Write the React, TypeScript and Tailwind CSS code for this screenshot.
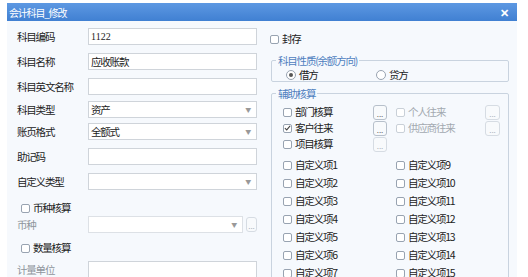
import React from "react";

const font = { fontFamily: '"Noto Sans CJK SC", "Noto Sans", sans-serif' };

function Box({ checked = false, disabled = false }: { checked?: boolean; disabled?: boolean }) {
  return (
    <span
      className={`inline-flex h-[9px] w-[9px] shrink-0 items-center justify-center rounded-[2px] border bg-white ${
        disabled ? "border-[#c9d0d8]" : "border-[#98a3b1]"
      }`}
    >
      {checked && (
        <svg width="8" height="8" viewBox="0 0 8 8">
          <path d="M1 4.2 L3.1 6.2 L7 1.6" fill="none" stroke="#444" strokeWidth="1.2" />
        </svg>
      )}
    </span>
  );
}

function Radio({ on = false }: { on?: boolean }) {
  return (
    <span className="inline-flex h-[10px] w-[10px] shrink-0 items-center justify-center rounded-full border border-[#98a3b1] bg-white">
      {on && <span className="h-[4px] w-[4px] rounded-full bg-[#555]" />}
    </span>
  );
}

function Dots({ disabled = false, w = "w-[14px]" }: { disabled?: boolean; w?: string }) {
  return (
    <span
      className={`flex h-[15px] ${w} items-end justify-center rounded-[3px] border bg-[#f8fafc] pb-[1px] text-[8px] leading-[8px] tracking-[0px] ${
        disabled ? "border-[#d6dce3] text-[#aab2bc]" : "border-[#b7c0cb] text-[#666]"
      }`}
    >
      ...
    </span>
  );
}

function Check({
  label,
  checked = false,
  disabled = false,
}: {
  label: string;
  checked?: boolean;
  disabled?: boolean;
}) {
  return (
    <span className="flex items-center gap-[3px]">
      <Box checked={checked} disabled={disabled} />
      <span className={`whitespace-nowrap ${disabled ? "text-[#a3a9b0]" : "text-[#222]"}`}>{label}</span>
    </span>
  );
}

function Row({
  label,
  mt,
  muted = false,
  children,
}: {
  label: string;
  mt: string;
  muted?: boolean;
  children: React.ReactNode;
}) {
  return (
    <div className={`flex h-[17px] items-center ${mt}`}>
      <span className={`w-[71px] whitespace-nowrap ${muted ? "text-[#8e959c]" : "text-[#222]"}`}>{label}</span>
      {children}
    </div>
  );
}

function Input({ value = "", serif = false }: { value?: string; serif?: boolean }) {
  return (
    <div
      className="flex h-[17px] w-[169px] items-center border border-[#cfd4da] bg-white pl-[2px] text-[#222]"
      style={serif ? { fontFamily: '"Liberation Serif", serif', fontSize: "10px", letterSpacing: 0 } : undefined}
    >
      {value}
    </div>
  );
}

function Select({ value = "", w = "w-[169px]", disabled = false }: { value?: string; w?: string; disabled?: boolean }) {
  return (
    <div
      className={`flex h-[17px] ${w} items-center justify-between border bg-white pl-[2px] pr-[6px] text-[#222] ${
        disabled ? "border-[#dde1e6]" : "border-[#cfd4da]"
      }`}
    >
      <span>{value}</span>
      <span className="text-[6px] text-[#999]">▼</span>
    </div>
  );
}

const pairs: [string, string][] = [
  ["自定义项1", "自定义项9"],
  ["自定义项2", "自定义项10"],
  ["自定义项3", "自定义项11"],
  ["自定义项4", "自定义项12"],
  ["自定义项5", "自定义项13"],
  ["自定义项6", "自定义项14"],
  ["自定义项7", "自定义项15"],
];

export default function App() {
  return (
    <div className="h-[277px] w-[528px] overflow-hidden bg-white text-[10.5px] tracking-[-1.2px]" style={font}>
      <div className="ml-[7px] mt-[3px] w-[510px]">
        {/* title bar */}
        <div className="flex h-[18px] items-center justify-between bg-gradient-to-b from-[#5d98e2] to-[#4080d2] pl-[2px] pr-[9px] text-[10px] text-white">
          <span>会计科目_修改</span>
          <span className="text-[11px] font-bold">✕</span>
        </div>

        {/* body */}
        <div className="flex h-[256px] bg-[#f6f9fd] leading-[14px]">
          {/* left column */}
          <div className="w-[257px] pl-[10px]">
            <Row label="科目编码" mt="mt-[7px]">
              <Input value="1122" serif />
            </Row>
            <Row label="科目名称" mt="mt-[8px]">
              <Input value="应收账款" />
            </Row>
            <Row label="科目英文名称" mt="mt-[8px]">
              <Input />
            </Row>
            <Row label="科目类型" mt="mt-[6px]">
              <Select value="资产" />
            </Row>
            <Row label="账页格式" mt="mt-[5px]">
              <Select value="全额式" />
            </Row>
            <Row label="助记码" mt="mt-[8px]">
              <Input />
            </Row>
            <Row label="自定义类型" mt="mt-[8px]">
              <Select />
            </Row>

            <div className="ml-[4px] mt-[11px] flex h-[14px] items-center">
              <Check label="币种核算" />
            </div>
            <Row label="币种" mt="mt-[1px]" muted>
              <div className="flex w-[169px] items-center justify-between">
                <Select w="w-[155px]" disabled />
                <Dots w="w-[11px]" disabled />
              </div>
            </Row>

            <div className="ml-[4px] mt-[8px] flex h-[14px] items-center">
              <Check label="数量核算" />
            </div>
            <Row label="计量单位" mt="mt-[6px]" muted>
              <Input />
            </Row>
          </div>

          {/* right column */}
          <div className="w-[253px]">
            <div className="ml-[6px] mt-[11px] flex h-[14px] items-center">
              <Check label="封存" />
            </div>

            <fieldset className="ml-[7px] mt-[8px] w-[238px] rounded-[2px] border border-[#c9d3df]">
              <legend className="ml-[4px] px-[2px] leading-[13px] text-[#4f7fbf]">科目性质(余额方向)</legend>
              <div className="flex h-[14px] items-center pl-[14px] pt-[2px]">
                <span className="flex w-[90px] items-center gap-[3px]">
                  <Radio on />
                  <span className="text-[#222]">借方</span>
                </span>
                <span className="flex items-center gap-[3px]">
                  <Radio />
                  <span className="text-[#222]">贷方</span>
                </span>
              </div>
            </fieldset>

            <fieldset className="ml-[7px] mt-[5px] h-[200px] w-[238px] rounded-[2px] border border-[#c9d3df]">
              <legend className="ml-[4px] px-[2px] leading-[13px] text-[#4f7fbf]">辅助核算</legend>

              <div className="pl-[11px]">
                <div className="mt-[4px] flex h-[16px] items-center">
                  <span className="w-[90px]">
                    <Check label="部门核算" />
                  </span>
                  <Dots />
                  <span className="ml-[9px] w-[89px]">
                    <Check label="个人往来" disabled />
                  </span>
                  <Dots disabled w="w-[15px]" />
                </div>
                <div className="flex h-[16px] items-center">
                  <span className="w-[90px]">
                    <Check label="客户往来" checked />
                  </span>
                  <Dots />
                  <span className="ml-[9px] w-[89px]">
                    <Check label="供应商往来" disabled />
                  </span>
                  <Dots disabled w="w-[15px]" />
                </div>
                <div className="flex h-[16px] items-center">
                  <span className="w-[90px]">
                    <Check label="项目核算" />
                  </span>
                  <Dots disabled />
                </div>

                <div className="mt-[4px]">
                  {pairs.map(([a, b]) => (
                    <div key={a} className="flex h-[18px] items-center">
                      <span className="w-[113px]">
                        <Check label={a} />
                      </span>
                      <Check label={b} />
                    </div>
                  ))}
                </div>
              </div>
            </fieldset>
          </div>
        </div>
      </div>
    </div>
  );
}
